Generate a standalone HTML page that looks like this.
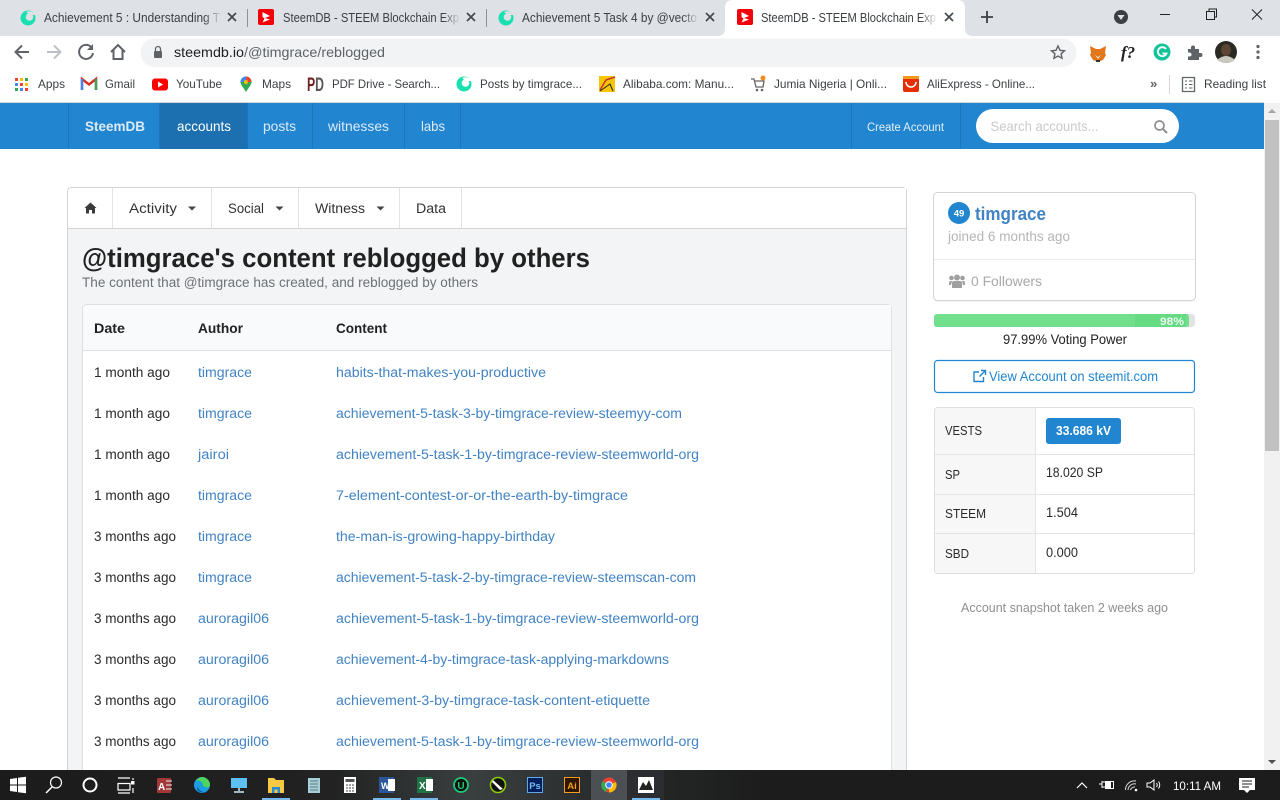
<!DOCTYPE html>
<html lang="en"><head><meta charset="utf-8"><title>SteemDB - STEEM Blockchain Explorer</title>
<style>
html,body{margin:0;padding:0;width:1280px;height:800px;overflow:hidden;background:#fff}
svg{display:block}
text{font-family:"Liberation Sans",Arial,sans-serif;font-size:14px}
.tab{font-size:12.5px;fill:#3c4043}
.bm{font-size:12px;fill:#3c4043}
.d{fill:#2a2a2a;font-size:13.5px}
.s{fill:#2a2a2a;font-size:12.5px}
.l{fill:#4183c4;font-size:13.5px}
.n{fill:#dcebf6;font-size:14px}
.m{fill:#333;font-size:13.5px}
.th{fill:#212121;font-size:13.5px;font-weight:bold}
</style></head><body>
<svg width="1280" height="800" viewBox="0 0 1280 800" xmlns="http://www.w3.org/2000/svg">
<defs>
<linearGradient id="fade" x1="0" x2="1"><stop offset="0" stop-color="#dee1e6" stop-opacity="0"/><stop offset="1" stop-color="#dee1e6"/></linearGradient>
<linearGradient id="fadew" x1="0" x2="1"><stop offset="0" stop-color="#fff" stop-opacity="0"/><stop offset="1" stop-color="#fff"/></linearGradient>
<linearGradient id="tb" x1="0" x2="1"><stop offset="0" stop-color="#1b1b1b"/><stop offset=".26" stop-color="#222"/><stop offset=".37" stop-color="#3a3f3f"/><stop offset=".47" stop-color="#282b2b"/><stop offset=".6" stop-color="#1c1c1c"/><stop offset="1" stop-color="#1c1c1c"/></linearGradient>
<g id="steem"><circle r="7.5" fill="#18e0b0"/><circle cx="1.5" cy="-1" r="3.8" fill="#dee1e6"/><path d="M-2-6 C2-8 6-6 7-3 L2-3Z" fill="#dee1e6"/></g>
<g id="steemw"><circle r="7.5" fill="#18e0b0"/><circle cx="1.5" cy="-1" r="3.8" fill="#fff"/><path d="M-2-6 C2-8 6-6 7-3 L2-3Z" fill="#fff"/></g>
<g id="sdb"><rect x="-8" y="-8" width="16" height="16" rx="2" fill="#f40009"/><path d="M-3.5-5 L4-1 -1 1 4 2.5 -3.5 5.5 -1.5 1.5 -3.5 0Z" fill="#fff"/></g>
<g id="x"><path d="M-4-4 4 4M4-4-4 4" stroke="#45494d" stroke-width="1.7" fill="none"/></g>
</defs>

<!-- Tab strip -->
<rect width="1280" height="36" fill="#dee1e6"/>
<use href="#steem" x="28" y="18"/>
<text class="tab" x="44" y="22" textLength="176" lengthAdjust="spacingAndGlyphs">Achievement 5 : Understanding T</text>
<rect x="204" y="8" width="18" height="20" fill="url(#fade)"/>
<use href="#x" x="232" y="17"/>
<rect x="247" y="9" width="1" height="18" fill="#8f9296"/>
<use href="#sdb" x="266" y="17"/>
<text class="tab" x="283" y="22" textLength="176" lengthAdjust="spacingAndGlyphs">SteemDB - STEEM Blockchain Exp</text>
<rect x="443" y="8" width="18" height="20" fill="url(#fade)"/>
<use href="#x" x="471" y="17"/>
<rect x="486" y="9" width="1" height="18" fill="#8f9296"/>
<use href="#steem" x="506" y="18"/>
<text class="tab" x="522" y="22" textLength="175" lengthAdjust="spacingAndGlyphs">Achievement 5 Task 4 by @vecto</text>
<rect x="682" y="8" width="17" height="20" fill="url(#fade)"/>
<use href="#x" x="710" y="17"/>
<path d="M717 36 Q725 36 725 28 L725 8 Q725 0 733 0 L957 0 Q965 0 965 8 L965 28 Q965 36 973 36Z" fill="#fff"/>
<use href="#sdb" x="745" y="17"/>
<text class="tab" x="761" y="22" textLength="175" lengthAdjust="spacingAndGlyphs">SteemDB - STEEM Blockchain Exp</text>
<rect x="920" y="8" width="18" height="20" fill="url(#fadew)"/>
<use href="#x" x="949" y="17"/>
<path d="M987 11V23M981 17H993" stroke="#3c4043" stroke-width="1.8"/>
<circle cx="1121" cy="17" r="7" fill="#3c4043"/><path d="M1117.5 15H1124.5L1121 20Z" fill="#dee1e6"/>
<path d="M1160 14.500H1170" stroke="#222" stroke-width="1"/>
<path d="M1206.500 11.500H1214.500V19.500H1206.500ZM1209 11V9H1216.500V17H1214.500" fill="none" stroke="#222"/>
<path d="M1252 9.500 1262 19.500M1262 9.500 1252 19.500" stroke="#222" stroke-width="1"/>

<!-- Toolbar -->
<rect y="36" width="1280" height="31" fill="#fff"/>
<path d="M29 52H16M22 45.500 15.500 52 22 58.500" fill="none" stroke="#5f6368" stroke-width="2"/>
<path d="M47 52H60M54 45.500 60.500 52 54 58.500" fill="none" stroke="#bdc1c6" stroke-width="2"/>
<path d="M91.500 47.500A7 7 0 1 0 93 53" fill="none" stroke="#5f6368" stroke-width="2"/><path d="M93 44V50H87Z" fill="#5f6368"/>
<path d="M111 52 118 45 125 52M113.500 50V59H122.500V50" fill="none" stroke="#5f6368" stroke-width="2"/>
<rect x="140.500" y="38.500" width="936" height="28.500" rx="14.250" fill="#f1f3f4"/>
<rect x="154" y="51" width="8" height="7" rx="1" fill="#5f6368"/><path d="M155.500 51V49A2.500 2.500 0 0 1 160.500 49V51" fill="none" stroke="#5f6368" stroke-width="1.300"/>
<text x="174" y="57" font-size="14" textLength="211" lengthAdjust="spacingAndGlyphs" style="font-size:14px" fill="#5f6368"><tspan fill="#202124">steemdb.io</tspan>/@timgrace/reblogged</text>
<path d="M1058 46 1060 50.300 1064.500 50.800 1061.100 53.800 1062 58.300 1058 56 1054 58.300 1054.900 53.800 1051.500 50.800 1056 50.300Z" fill="none" stroke="#5f6368" stroke-width="1.400"/>
<path d="M1090 46 1096 49H1100L1106 46 1105 53 1106 55 1103 60 1100 61H1096L1093 60 1090 55 1091 53Z" fill="#e2761b"/><path d="M1095 55 1098 59 1101 55 1098 57Z" fill="#f5e1c8"/><path d="M1096 60H1100V62H1096Z" fill="#333"/>
<text x="1121" y="58" fill="#222" style="font-family:'Liberation Serif',serif;font-size:17px;font-style:italic;font-weight:bold">f?</text>
<circle cx="1162" cy="52" r="8.500" fill="#15c39a"/><path d="M1166 49A4.500 4.500 0 1 0 1166.500 53.500H1162.500" fill="none" stroke="#fff" stroke-width="1.800"/>
<path d="M1188 49H1191V47.500A2 2 0 0 1 1195 47.500V49H1199V53H1200.500A2 2 0 0 1 1200.500 57H1199V60H1188V56.500H1189.500A2 2 0 0 0 1189.500 52.500H1188Z" fill="#5f6368"/>
<circle cx="1226" cy="52" r="11" fill="#2b2a22"/><ellipse cx="1226" cy="50" rx="5" ry="6" fill="#5c4532"/><path d="M1217 60Q1226 52 1235 60Q1231 63 1226 63Q1221 63 1217 60Z" fill="#c9c9c0"/>
<g fill="#5f6368"><circle cx="1258" cy="46.500" r="1.600"/><circle cx="1258" cy="52" r="1.600"/><circle cx="1258" cy="57.500" r="1.600"/></g>

<!-- Bookmarks -->
<rect y="67" width="1280" height="35" fill="#fff"/>
<g>
<rect x="15" y="78" width="3" height="3" fill="#ea4335"/><rect x="20" y="78" width="3" height="3" fill="#fbbc05"/><rect x="25" y="78" width="3" height="3" fill="#34a853"/>
<rect x="15" y="83" width="3" height="3" fill="#4285f4"/><rect x="20" y="83" width="3" height="3" fill="#ea4335"/><rect x="25" y="83" width="3" height="3" fill="#fbbc05"/>
<rect x="15" y="88" width="3" height="3" fill="#34a853"/><rect x="20" y="88" width="3" height="3" fill="#4285f4"/><rect x="25" y="88" width="3" height="3" fill="#ea4335"/>
</g>
<text class="bm" x="38" y="88" textLength="27" lengthAdjust="spacingAndGlyphs">Apps</text>
<path d="M82 90V79L89 84.500 96 79V90" fill="none" stroke="#d93025" stroke-width="2.400"/><path d="M82 79V90" stroke="#4285f4" stroke-width="2.400"/><path d="M96 79V90" stroke="#34a853" stroke-width="2.400"/>
<text class="bm" x="105" y="88" textLength="30" lengthAdjust="spacingAndGlyphs">Gmail</text>
<rect x="152" y="78.500" width="16" height="12" rx="3" fill="#f00"/><path d="M158 81.500 163 84.500 158 87.500Z" fill="#fff"/>
<text class="bm" x="176" y="88" textLength="46" lengthAdjust="spacingAndGlyphs">YouTube</text>
<path d="M246 92C243 87 240.500 85 240.500 82A5.500 5.500 0 0 1 251.500 82C251.500 85 249 87 246 92Z" fill="#34a853"/><path d="M240.500 82A5.500 5.500 0 0 1 246 76.500V82Z" fill="#4285f4"/><path d="M246 76.500A5.500 5.500 0 0 1 251.500 82H246Z" fill="#ea4335"/><circle cx="246" cy="82" r="2" fill="#fbbc05"/>
<text class="bm" x="262" y="88" textLength="29" lengthAdjust="spacingAndGlyphs">Maps</text>
<text x="307" y="91" fill="#555" style="font-size:19px;font-weight:bold" textLength="17" lengthAdjust="spacingAndGlyphs"><tspan fill="#6e1f1f">P</tspan>D</text>
<text class="bm" x="332" y="88" textLength="108" lengthAdjust="spacingAndGlyphs">PDF Drive - Search...</text>
<use href="#steemw" x="464" y="84"/>
<text class="bm" x="480" y="88" textLength="102" lengthAdjust="spacingAndGlyphs">Posts by timgrace...</text>
<rect x="599" y="76" width="16" height="16" fill="#f7c600"/><path d="M600 90 606 80 615 77" fill="none" stroke="#c33" stroke-width="1.500"/><path d="M600 91 610 84 613 91" fill="none" stroke="#222"/>
<text class="bm" x="623" y="88" textLength="111" lengthAdjust="spacingAndGlyphs">Alibaba.com: Manu...</text>
<path d="M751 79H754L756 87H763L764 81H755" fill="none" stroke="#666" stroke-width="1.300"/><circle cx="757" cy="90" r="1.300" fill="#666"/><circle cx="762" cy="90" r="1.300" fill="#666"/><circle cx="763" cy="78" r="2.500" fill="#f68b1e"/>
<text class="bm" x="774" y="88" textLength="113" lengthAdjust="spacingAndGlyphs">Jumia Nigeria | Onli...</text>
<rect x="903" y="76" width="16" height="16" rx="2" fill="#e62e04"/><path d="M906 82A5 5 0 0 0 916 82" fill="none" stroke="#fff" stroke-width="1.500"/><rect x="903" y="76" width="16" height="3" fill="#f7971e"/>
<text class="bm" x="927" y="88" textLength="108" lengthAdjust="spacingAndGlyphs">AliExpress - Online...</text>
<text x="1150" y="88" fill="#5f6368" style="font-size:13px;font-weight:bold">»</text>
<rect x="1169" y="75" width="1" height="19" fill="#d5d7da"/>
<path d="M1182.500 77.500H1194.500V91.500H1182.500Z" fill="none" stroke="#5f6368" stroke-width="1.300"/><path d="M1185 81H1187M1189 81H1192.500M1185 84.500H1187M1189 84.500H1192.500M1185 88H1187M1189 88H1192.500" stroke="#5f6368"/>
<text class="bm" x="1204" y="88" textLength="62" lengthAdjust="spacingAndGlyphs">Reading list</text>
<rect y="102" width="1264" height="1" fill="#d5d6d8"/>

<!-- Site nav -->
<rect y="103" width="1264" height="46" fill="#2185d0"/>
<rect x="160" y="103" width="87" height="46" fill="#1c70b0"/>
<g fill="#1b76bb"><rect x="68" y="103" width="1" height="46"/><rect x="159" y="103" width="1" height="46"/><rect x="247" y="103" width="1" height="46"/><rect x="312" y="103" width="1" height="46"/><rect x="404" y="103" width="1" height="46"/><rect x="460" y="103" width="1" height="46"/><rect x="851" y="103" width="1" height="46"/><rect x="960" y="103" width="1" height="46"/></g>
<text x="85" y="131" fill="#dcebf6" style="font-size:14px;font-weight:bold" textLength="60" lengthAdjust="spacingAndGlyphs">SteemDB</text>
<text x="177" y="131" fill="#fff" textLength="54" lengthAdjust="spacingAndGlyphs">accounts</text>
<text class="n" x="263" y="131" textLength="33" lengthAdjust="spacingAndGlyphs">posts</text>
<text class="n" x="328" y="131" textLength="61" lengthAdjust="spacingAndGlyphs">witnesses</text>
<text class="n" x="421" y="131" textLength="24" lengthAdjust="spacingAndGlyphs">labs</text>
<text x="867" y="131" fill="#e3f0f9" style="font-size:11.500px" textLength="77" lengthAdjust="spacingAndGlyphs">Create Account</text>
<rect x="976" y="109" width="203" height="34" rx="17" fill="#fff"/>
<text x="990.500" y="131" fill="#c9c9c9" style="font-size:14px" textLength="108" lengthAdjust="spacingAndGlyphs">Search accounts...</text>
<circle cx="1159.500" cy="125.500" r="4.500" fill="none" stroke="#8e8e8e" stroke-width="1.700"/><path d="M1163 129 1167 133" stroke="#8e8e8e" stroke-width="2"/>

<!-- Main panel -->
<rect x="67.500" y="187.500" width="839" height="640" rx="4" fill="#f3f4f5" stroke="#d4d4d5"/>
<path d="M68 228V192Q68 188 72 188H906V228Z" fill="#fff"/>
<rect x="68" y="228" width="838" height="1" fill="#d4d4d5"/>
<g fill="#e3e3e4"><rect x="112" y="188" width="1" height="40"/><rect x="211" y="188" width="1" height="40"/><rect x="298" y="188" width="1" height="40"/><rect x="399" y="188" width="1" height="40"/><rect x="461" y="188" width="1" height="40"/></g>
<path d="M90.500 202.500 96.500 208H95V213.500H92V210H89V213.500H86V208H84.500Z" fill="#3b3b3b"/>
<text class="m" x="129" y="213" textLength="48" lengthAdjust="spacingAndGlyphs">Activity</text>
<path d="M188 206.500H196L192 210.500Z" fill="#444"/>
<text class="m" x="228" y="213" textLength="36" lengthAdjust="spacingAndGlyphs">Social</text>
<path d="M275.500 206.500H283.500L279.500 210.500Z" fill="#444"/>
<text class="m" x="315" y="213" textLength="50" lengthAdjust="spacingAndGlyphs">Witness</text>
<path d="M376.500 206.500H384.500L380.500 210.500Z" fill="#444"/>
<text class="m" x="416" y="213" textLength="30" lengthAdjust="spacingAndGlyphs">Data</text>
<text x="82" y="267" fill="#212121" style="font-size:27px;font-weight:bold" textLength="508" lengthAdjust="spacingAndGlyphs">@timgrace's content reblogged by others</text>
<text x="82" y="287" fill="#6c7178" style="font-size:13.500px" textLength="396" lengthAdjust="spacingAndGlyphs">The content that @timgrace has created, and reblogged by others</text>

<!-- Table -->
<rect x="82.500" y="304.500" width="809" height="520" rx="4" fill="#fff" stroke="#dedfe0"/>
<path d="M83 350V309Q83 305 87 305H891V350Z" fill="#f9fafb"/>
<rect x="83" y="350" width="808" height="1" fill="#dedfe0"/>
<text class="th" x="94" y="333" textLength="31" lengthAdjust="spacingAndGlyphs">Date</text>
<text class="th" x="198" y="333" textLength="45" lengthAdjust="spacingAndGlyphs">Author</text>
<text class="th" x="336" y="333" textLength="51" lengthAdjust="spacingAndGlyphs">Content</text>

<text class="d" x="94" y="377" textLength="76" lengthAdjust="spacingAndGlyphs">1 month ago</text><text class="l" x="198" y="377" textLength="54" lengthAdjust="spacingAndGlyphs">timgrace</text><text class="l" x="336" y="377" textLength="210" lengthAdjust="spacingAndGlyphs">habits-that-makes-you-productive</text>
<text class="d" x="94" y="418" textLength="76" lengthAdjust="spacingAndGlyphs">1 month ago</text><text class="l" x="198" y="418" textLength="54" lengthAdjust="spacingAndGlyphs">timgrace</text><text class="l" x="336" y="418" textLength="346" lengthAdjust="spacingAndGlyphs">achievement-5-task-3-by-timgrace-review-steemyy-com</text>
<text class="d" x="94" y="459" textLength="76" lengthAdjust="spacingAndGlyphs">1 month ago</text><text class="l" x="198" y="459" textLength="31" lengthAdjust="spacingAndGlyphs">jairoi</text><text class="l" x="336" y="459" textLength="363" lengthAdjust="spacingAndGlyphs">achievement-5-task-1-by-timgrace-review-steemworld-org</text>
<text class="d" x="94" y="500" textLength="76" lengthAdjust="spacingAndGlyphs">1 month ago</text><text class="l" x="198" y="500" textLength="54" lengthAdjust="spacingAndGlyphs">timgrace</text><text class="l" x="336" y="500" textLength="292" lengthAdjust="spacingAndGlyphs">7-element-contest-or-or-the-earth-by-timgrace</text>
<text class="d" x="94" y="541" textLength="82" lengthAdjust="spacingAndGlyphs">3 months ago</text><text class="l" x="198" y="541" textLength="54" lengthAdjust="spacingAndGlyphs">timgrace</text><text class="l" x="336" y="541" textLength="219" lengthAdjust="spacingAndGlyphs">the-man-is-growing-happy-birthday</text>
<text class="d" x="94" y="582" textLength="82" lengthAdjust="spacingAndGlyphs">3 months ago</text><text class="l" x="198" y="582" textLength="54" lengthAdjust="spacingAndGlyphs">timgrace</text><text class="l" x="336" y="582" textLength="360" lengthAdjust="spacingAndGlyphs">achievement-5-task-2-by-timgrace-review-steemscan-com</text>
<text class="d" x="94" y="623" textLength="82" lengthAdjust="spacingAndGlyphs">3 months ago</text><text class="l" x="198" y="623" textLength="71" lengthAdjust="spacingAndGlyphs">auroragil06</text><text class="l" x="336" y="623" textLength="363" lengthAdjust="spacingAndGlyphs">achievement-5-task-1-by-timgrace-review-steemworld-org</text>
<text class="d" x="94" y="664" textLength="82" lengthAdjust="spacingAndGlyphs">3 months ago</text><text class="l" x="198" y="664" textLength="71" lengthAdjust="spacingAndGlyphs">auroragil06</text><text class="l" x="336" y="664" textLength="333" lengthAdjust="spacingAndGlyphs">achievement-4-by-timgrace-task-applying-markdowns</text>
<text class="d" x="94" y="705" textLength="82" lengthAdjust="spacingAndGlyphs">3 months ago</text><text class="l" x="198" y="705" textLength="71" lengthAdjust="spacingAndGlyphs">auroragil06</text><text class="l" x="336" y="705" textLength="314" lengthAdjust="spacingAndGlyphs">achievement-3-by-timgrace-task-content-etiquette</text>
<text class="d" x="94" y="746" textLength="82" lengthAdjust="spacingAndGlyphs">3 months ago</text><text class="l" x="198" y="746" textLength="71" lengthAdjust="spacingAndGlyphs">auroragil06</text><text class="l" x="336" y="746" textLength="363" lengthAdjust="spacingAndGlyphs">achievement-5-task-1-by-timgrace-review-steemworld-org</text>

<!-- Sidebar card -->
<rect x="933.500" y="193.500" width="262" height="108" rx="4" fill="#e8e8e8"/>
<rect x="933.500" y="192.500" width="262" height="108" rx="4" fill="#fff" stroke="#d4d4d5"/>
<rect x="934" y="259" width="261" height="1" fill="#ececec"/>
<circle cx="959" cy="213" r="11" fill="#2185d0"/>
<text x="959" y="216.500" fill="#fff" text-anchor="middle" style="font-size:9.500px;font-weight:bold">49</text>
<text x="975" y="220" fill="#4183c4" style="font-size:18px;font-weight:bold" textLength="71" lengthAdjust="spacingAndGlyphs">timgrace</text>
<text x="948" y="241" fill="#b5b5b5" style="font-size:13.500px" textLength="122" lengthAdjust="spacingAndGlyphs">joined 6 months ago</text>
<g fill="#a0a0a0"><circle cx="957" cy="277.500" r="3"/><circle cx="951.500" cy="278" r="2.300"/><circle cx="962.500" cy="278" r="2.300"/><path d="M952 288V283Q952 281 954 281H960Q962 281 962 283V288Z"/><path d="M949 285V282.500Q949 281 951 281H952L951 285ZM965 285V282.500Q965 281 963 281H962L963 285Z"/></g>
<text x="971" y="286" fill="#a8a8a8" style="font-size:13.500px" textLength="71" lengthAdjust="spacingAndGlyphs">0 Followers</text>

<!-- Voting -->
<rect x="934" y="314" width="261" height="13" rx="3" fill="#e3e3e3"/>
<path d="M937 314H1186Q1189 314 1189 317V324Q1189 327 1186 327H937Q934 327 934 324V317Q934 314 937 314Z" fill="#72df8c"/>
<rect x="1135" y="314" width="51" height="13" fill="#67db84"/>
<text x="1160" y="325" fill="#e9faee" style="font-size:11px;font-weight:bold" textLength="24" lengthAdjust="spacingAndGlyphs">98%</text>
<text x="1003" y="344" fill="#212121" style="font-size:13.500px" textLength="124" lengthAdjust="spacingAndGlyphs">97.99% Voting Power</text>
<rect x="934.500" y="360.500" width="260" height="32" rx="3" fill="#fff" stroke="#2185d0" stroke-width="1.200"/>
<path d="M983.500 377V381.500H974V372H979M981 370.500H985.500V375M985.500 370.500 979.500 376.500" fill="none" stroke="#2185d0" stroke-width="1.400"/>
<text x="989" y="381" fill="#2185d0" style="font-size:13.500px" textLength="169" lengthAdjust="spacingAndGlyphs">View Account on steemit.com</text>

<!-- Stats -->
<rect x="934.500" y="407.500" width="260" height="166" rx="3" fill="#fff" stroke="#dfdfdf"/>
<path d="M935 454V411Q935 408 938 408H1035V573H938Q935 573 935 570Z" fill="#f7f7f7"/>
<g fill="#e3e3e3"><rect x="1035" y="408" width="1" height="165"/><rect x="935" y="454" width="259" height="1"/><rect x="935" y="494" width="259" height="1"/><rect x="935" y="533" width="259" height="1"/></g>
<text class="s" x="945" y="435" textLength="37" lengthAdjust="spacingAndGlyphs">VESTS</text>
<text class="s" x="945" y="479" textLength="15" lengthAdjust="spacingAndGlyphs">SP</text>
<text class="s" x="945" y="518" textLength="41" lengthAdjust="spacingAndGlyphs">STEEM</text>
<text class="s" x="945" y="558" textLength="24" lengthAdjust="spacingAndGlyphs">SBD</text>
<rect x="1046" y="418" width="75" height="26" rx="3" fill="#2185d0"/>
<text x="1056" y="435" fill="#fff" style="font-size:12.500px;font-weight:bold" textLength="55" lengthAdjust="spacingAndGlyphs">33.686 kV</text>
<text class="d" x="1046" y="477" textLength="57" lengthAdjust="spacingAndGlyphs">18.020 SP</text>
<text class="d" x="1046" y="517" textLength="32" lengthAdjust="spacingAndGlyphs">1.504</text>
<text class="d" x="1046" y="557" textLength="32" lengthAdjust="spacingAndGlyphs">0.000</text>
<text x="961" y="612" fill="#8f8f8f" style="font-size:13px" textLength="207" lengthAdjust="spacingAndGlyphs">Account snapshot taken 2 weeks ago</text>

<!-- Scrollbar -->
<rect x="1264" y="103" width="16" height="667" fill="#f1f1f1"/>
<rect x="1265" y="120" width="14" height="331" fill="#c1c1c1"/>
<path d="M1268 113 1272 109 1276 113Z" fill="#a3a3a3"/>
<path d="M1268 760 1272 764 1276 760Z" fill="#505050"/>

<!-- Taskbar -->
<rect y="770" width="1280" height="30" fill="url(#tb)"/>
<path d="M10 779 17 778V784.500H10ZM18 777.800 26 776.800V784.500H18ZM10 785.500H17V792L10 791ZM18 785.500H26V793.200L18 792.200Z" fill="#fff"/>
<circle cx="56" cy="782.500" r="5.500" fill="none" stroke="#fff" stroke-width="1.200"/><path d="M52 787 46 793" stroke="#fff" stroke-width="1.500"/>
<circle cx="90" cy="785" r="6.500" fill="none" stroke="#fff" stroke-width="2"/>
<path d="M118 783.500H130V790H118ZM118 778H130M118 793H130M133 778V780M133 788V793" fill="none" stroke="#fff" stroke-width="1.200"/><rect x="131" y="781" width="3.500" height="3.500" fill="#fff"/>
<rect x="157" y="778" width="14" height="15" rx="1" fill="#a4373a"/><text x="158" y="790" fill="#fff" style="font-size:10px;font-weight:bold">A</text><path d="M166 781H172M166 785H172M166 789H172" stroke="#eee"/>
<circle cx="202" cy="785" r="8" fill="#1b9de2"/><path d="M202 777A8 8 0 0 1 210 785C210 788 205 788 203 786A5 5 0 0 0 196 781A8 8 0 0 1 202 777Z" fill="#4fd35a"/><path d="M198 786Q198 791 205 792.500 200 793 197 790Z" fill="#0c59a4"/>
<rect x="231" y="778" width="16" height="10" fill="#5cc0f2"/><path d="M239 788V791M234 792H244" stroke="#cfe7f5" stroke-width="1.500"/>
<path d="M268 778H274L276 780H284V793H268Z" fill="#f6c944"/><path d="M272 793V787H280V793H277.500V789.500H274.500V793Z" fill="#2a8ad4"/>
<path d="M308 778H320V793H308Z" fill="#a9cfd6"/><path d="M310 781H318M310 784H318M310 787H318M310 790H318" stroke="#5b7d85"/>
<rect x="344" y="777" width="12" height="16" fill="#fff"/><rect x="345.500" y="779" width="9" height="3" fill="#555"/><path d="M346 785H348M349 785H351M352 785H354M346 788H348M349 788H351M352 788H354M346 791H348M349 791H351M352 791H354" stroke="#444"/>
<rect x="379" y="777" width="15" height="16" fill="#2b579a"/><rect x="388" y="779" width="7" height="12" fill="#fff"/><text x="381" y="789" fill="#fff" style="font-size:9px;font-weight:bold">W</text>
<rect x="417" y="777" width="15" height="16" fill="#217346"/><rect x="426" y="779" width="7" height="12" fill="#fff"/><text x="419" y="789" fill="#fff" style="font-size:10px;font-weight:bold">X</text>
<circle cx="461" cy="785" r="7" fill="#111" stroke="#1ec876" stroke-width="1.800"/><text x="461" y="789" fill="#1ec876" text-anchor="middle" style="font-size:10px;font-weight:bold">U</text>
<circle cx="498" cy="785" r="7.500" fill="#111" stroke="#8fd100" stroke-width="1.500"/><path d="M493 780 503 789 500 790 492 782Z" fill="#fff"/>
<rect x="527.500" y="777.500" width="15" height="15" fill="#001d5c" stroke="#5fa8e6"/><text x="535" y="789" fill="#7dbcf0" text-anchor="middle" style="font-size:9.500px;font-weight:bold">Ps</text>
<rect x="564.500" y="777.500" width="15" height="15" fill="#2d1500" stroke="#f59e1b"/><text x="572" y="789" fill="#f59e1b" text-anchor="middle" style="font-size:9.500px;font-weight:bold">Ai</text>
<rect x="591" y="770" width="36" height="30" fill="#4c4f53"/>
<circle cx="609" cy="785" r="7.500" fill="#ea4335"/><path d="M609 785 602.500 781A7.500 7.500 0 0 0 606 792Z" fill="#34a853"/><path d="M609 785V792.500A7.500 7.500 0 0 0 616 782Z" fill="#fbbc05"/><circle cx="609" cy="785" r="3.300" fill="#4285f4" stroke="#fff"/>
<rect x="627" y="770" width="37" height="30" fill="#2b2d31"/>
<rect x="638" y="777" width="16" height="16" fill="#fff"/><path d="M639 790 643 782 646 786 649 780 653 790Z" fill="#222"/>
<g fill="#76b9ed"><rect x="262" y="798" width="28" height="2"/><rect x="373" y="798" width="28" height="2"/><rect x="410" y="798" width="28" height="2"/><rect x="632" y="798" width="28" height="2"/></g>
<path d="M1077 788 1082 783 1087 788" fill="none" stroke="#fff" stroke-width="1.200"/>
<path d="M1099 784H1102M1102 781V788M1102 782H1105M1102 787H1105" stroke="#fff"/><rect x="1105.500" y="781.500" width="8" height="7" fill="none" stroke="#fff"/><rect x="1106" y="782" width="5" height="6" fill="#fff"/>
<path d="M1125.500 790A9 9 0 0 1 1136 781M1128 790A6.500 6.500 0 0 1 1136 784M1130.500 790A4 4 0 0 1 1135 787" fill="none" stroke="#ddd"/><circle cx="1136" cy="790" r="1.300" fill="#fff"/>
<path d="M1147 783H1150L1154 780V790L1150 787H1147ZM1156.500 783Q1158 785 1156.500 787M1158.500 781.500Q1161 785 1158.500 788.500" fill="none" stroke="#fff"/>
<text x="1173" y="790" fill="#fff" style="font-size:12px" textLength="48" lengthAdjust="spacingAndGlyphs">10:11 AM</text>
<path d="M1239 778H1255V790H1250L1247 793 1244 790H1239Z" fill="#fff"/><path d="M1242 781H1252M1242 784H1252M1242 787H1249" stroke="#1c1c1c"/>
</svg>
</body></html>
